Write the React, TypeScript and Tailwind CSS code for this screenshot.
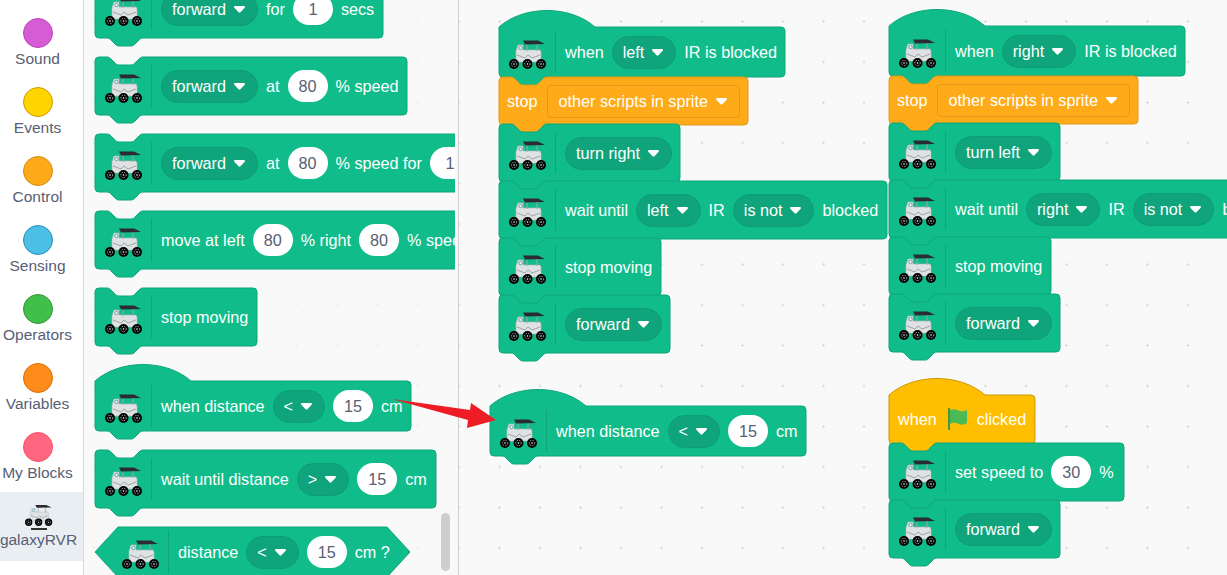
import React from 'react';

const GREEN = '#10bd8a';
const GREEN_EDGE = '#0da57a';

const tabBottom = (h: number) =>
  `V${h - 4} a4,4 0 0 1 -4,4 H48 c-2,0 -3,1 -4,2 l-4,4 c-1,1 -2,2 -4,2 h-12 c-2,0 -3,-1 -4,-2 l-4,-4 c-1,-1 -2,-2 -4,-2 H4 a4,4 0 0 1 -4,-4 z`;

const stackPath = (w: number, h: number) =>
  `M0,4 a4,4 0 0 1 4,-4 H12 c2,0 3,1 4,2 l4,4 c1,1 2,2 4,2 h12 c2,0 3,-1 4,-2 l4,-4 c1,-1 2,-2 4,-2 H${w - 4} a4,4 0 0 1 4,4 ${tabBottom(h)}`;

const hatPath = (w: number, h: number) =>
  `M0,0 c25,-22 71,-22 96,0 H${w - 4} a4,4 0 0 1 4,4 ${tabBottom(h)}`;

const hexPath = (w: number, h: number) =>
  `M0,${h / 2} L23,0 H${w - 23} L${w},${h / 2} L${w - 23},${h} H23 z`;

type BlockProps = {
  w: number;
  h?: number;
  shape?: 'stack' | 'hat' | 'hex';
  fill?: string;
  edge?: string;
  className?: string;
  children: React.ReactNode;
};

function Block({ w, h = 58, shape = 'stack', fill = GREEN, edge = GREEN_EDGE, className = '', children }: BlockProps) {
  const d = shape === 'hat' ? hatPath(w, h) : shape === 'hex' ? hexPath(w, h) : stackPath(w, h);
  return (
    <div className={`relative flex shrink-0 items-center ${className}`} style={{ width: w, height: h }}>
      <svg className="absolute left-0 top-0 overflow-visible" width={w} height={h}>
        <path d={d} fill={fill} stroke={edge} strokeWidth="1" />
      </svg>
      <div className="relative flex items-center whitespace-nowrap text-[16.2px] text-white">{children}</div>
    </div>
  );
}

function Rover({ small }: { small?: boolean }) {
  return (
    <svg
      viewBox="0 0 38 31"
      className={small ? 'h-[23px] w-[28px] shrink-0' : 'mt-[3px] h-[31px] w-[38px] shrink-0'}
    >
      <path d="M9 7h5v5h17l1 2v7l-3 3H9l-2-3v-8z" fill="#dfe2e2" stroke="#b4b8b8" strokeWidth="0.6" />
      <path d="M8 17l8 3 3-3 4 3 8-3M18 6v7M28 6v7" fill="none" stroke="#a0a5a5" strokeWidth="1" />
      <path d="M14 2.5h15l7 3.5-20 .4z" fill="#2a2c2f" />
      <circle cx="11.5" cy="10" r="1.7" fill="#eef6f8" stroke="#4a8fa8" strokeWidth="0.8" />
      {[5, 18.5, 32].map((x) => (
        <g key={x}>
          <circle cx={x} cy="26" r="5" fill="#000" />
          <circle cx={x} cy="26" r="2.7" fill="none" stroke="#d6d6d6" strokeWidth="0.8" strokeDasharray="1.4 1.2" />
          <circle cx={x} cy="26" r="0.8" fill="#fff" />
        </g>
      ))}
    </svg>
  );
}

function Head() {
  return (
    <>
      <Rover />
      <span className="ml-2 mr-[9px] h-[42px] w-px bg-[#0da57a]" />
    </>
  );
}

function Caret() {
  return (
    <svg viewBox="0 0 11 7" className="h-[7px] w-[11px] shrink-0">
      <path d="M1.2 0h8.6c1 0 1.5 1 .9 1.8L6.4 6.2c-.5.6-1.3.6-1.8 0L.3 1.8C-.3 1 .2 0 1.2 0z" fill="#fff" />
    </svg>
  );
}

function Drop({ label }: { label: string }) {
  return (
    <span className="flex h-[33px] items-center gap-2 rounded-full border border-[#0d9c74] bg-[#0fa47b] pl-[10px] pr-3 text-white">
      {label}
      <Caret />
    </span>
  );
}

function Val({ v }: { v: string }) {
  return (
    <span className="flex h-[32px] w-[40px] shrink-0 items-center justify-center rounded-full bg-white text-[#575e75]">
      {v}
    </span>
  );
}

function Row({ children }: { children: React.ReactNode }) {
  return <div className="flex items-center gap-2">{children}</div>;
}

function StopBlock({ w }: { w: number }) {
  return (
    <Block w={w} h={48} fill="#ffab19" edge="#e09a18">
      <div className="flex items-center gap-[9px] pl-2">
        <span>stop</span>
        <span className="flex h-[33px] items-center gap-2 rounded-[4px] border border-[#e39818] bg-[#ffab19] pl-[11px] pr-[12px]">
          other scripts in sprite
          <Caret />
        </span>
      </div>
    </Block>
  );
}

function Code({ w, hat, joined, children }: { w: number; hat?: boolean; joined?: boolean; children: React.ReactNode }) {
  return (
    <Block w={w} h={hat ? 50 : 58} shape={hat ? 'hat' : 'stack'} className={joined ? '-mt-px' : ''}>
      <div className="flex items-center pl-[10px]">
        <Head />
        <Row>{children}</Row>
      </div>
    </Block>
  );
}

function IRStack({ side, turn, w }: { side: string; turn: string; w: number[] }) {
  return (
    <>
      <Code w={w[0]} hat>
        when <Drop label={side} /> IR is blocked
      </Code>
      <StopBlock w={w[1]} />
      <Code w={w[2]} joined>
        <Drop label={turn} />
      </Code>
      <Code w={w[3]} joined>
        wait until <Drop label={side} /> IR <Drop label="is not" /> blocked
      </Code>
      <Code w={w[4]} joined>
        stop moving
      </Code>
      <Code w={w[5]} joined>
        <Drop label="forward" />
      </Code>
    </>
  );
}

const categories = [
  { name: 'Sound', fill: 'bg-[#d65cd6]', edge: 'border-[#bd42bd]' },
  { name: 'Events', fill: 'bg-[#ffd500]', edge: 'border-[#cc9900]' },
  { name: 'Control', fill: 'bg-[#ffab19]', edge: 'border-[#cf8b17]' },
  { name: 'Sensing', fill: 'bg-[#4cbfe6]', edge: 'border-[#2e8eb8]' },
  { name: 'Operators', fill: 'bg-[#40bf4a]', edge: 'border-[#389438]' },
  { name: 'Variables', fill: 'bg-[#ff8c1a]', edge: 'border-[#db6e00]' },
  { name: 'My Blocks', fill: 'bg-[#ff6680]', edge: 'border-[#ff4d6a]' },
];

export default function App() {
  return (
    <div className="relative flex h-[575px] w-[1227px] overflow-hidden bg-white font-['Liberation_Sans',Arial,sans-serif]">
      {/* category column */}
      <aside className="flex w-[84px] shrink-0 flex-col items-stretch border-r border-[#d9d9d9] bg-white pt-[9px] text-[15.5px] leading-4 text-[#575e75]">
        {categories.map((c) => (
          <div key={c.name} className="flex h-[69px] flex-col items-center whitespace-nowrap pr-2 pt-[9px]">
            <span className={`h-[30px] w-[30px] rounded-full border ${c.fill} ${c.edge}`} />
            <span className="mt-[3px]">{c.name}</span>
          </div>
        ))}
        <div className="flex h-[69px] flex-col items-center overflow-hidden whitespace-nowrap bg-[#e9eef2] pr-[6px] pt-[11px]">
          <Rover small />
          <span className="mt-[2px] h-[2px] w-[16px] bg-[#333]" />
          <span className="mt-[2px]">galaxyRVR</span>
        </div>
      </aside>

      {/* palette */}
      <section className="relative w-[375px] shrink-0 border-r border-[#d0d0d0] bg-[#f9f9f9] bg-[radial-gradient(circle,#f0f0f0_1px,transparent_1.2px)] bg-[size:40.5px_40.5px] bg-[position:30.25px_0.75px]">
        <div className="h-full w-[371px] overflow-hidden">
          <div className="-mt-[20px] flex flex-col gap-[19px] pl-[11px]">
            <Code w={288}>
              <Drop label="forward" /> for <Val v="1" /> secs
            </Code>
            <Code w={312}>
              <Drop label="forward" /> at <Val v="80" /> % speed
            </Code>
            <Code w={460}>
              <Drop label="forward" /> at <Val v="80" /> % speed for <Val v="1" />
            </Code>
            <Code w={460}>
              move at left <Val v="80" /> % right <Val v="80" /> % speed
            </Code>
            <Code w={162}>stop moving</Code>
            <div className="mt-[16px]">
              <Code w={316} hat>
                when distance <Drop label="<" /> <Val v="15" /> cm
              </Code>
            </div>
            <Code w={341}>
              wait until distance <Drop label=">" /> <Val v="15" /> cm
            </Code>
            <Block w={315} h={50} shape="hex">
              <div className="flex items-center pl-[27px]">
                <Head />
                <Row>
                  distance <Drop label="<" /> <Val v="15" /> cm ?
                </Row>
              </div>
            </Block>
          </div>
        </div>
        <span className="absolute left-[357px] top-[513px] h-[58px] w-[9px] rounded-full bg-[#cecece]" />
      </section>

      {/* workspace */}
      <main className="relative flex-1 bg-[#f9f9f9] bg-[radial-gradient(circle,#dcdcdc_1px,transparent_1.2px)] bg-[size:40.5px_40.5px] bg-[position:20.25px_1.25px]">
        <div className="absolute left-[40px] top-[27px] flex flex-col items-start">
          <IRStack side="left" turn="turn right" w={[286, 249, 181, 388, 162, 171]} />
        </div>
        <div className="absolute left-[430px] top-[26px] flex flex-col items-start">
          <IRStack side="right" turn="turn left" w={[296, 249, 171, 420, 162, 171]} />
        </div>
        <div className="absolute left-[31px] top-[406px]">
          <Code w={316} hat>
            when distance <Drop label="<" /> <Val v="15" /> cm
          </Code>
        </div>
        <div className="absolute left-[430px] top-[395px] flex flex-col items-start">
          <Block w={146} h={49} shape="hat" fill="#ffbf00" edge="#cc9900">
            <div className="flex items-center pl-[9px]">
              when
              <svg viewBox="0 0 21 22" className="ml-[10px] mr-[9px] h-[22px] w-[21px]">
                <path d="M1 0h2v22H1z" fill="#45993d" />
                <path d="M3 2c5-2 7 0 10 1 3 .8 5 0 7-1v13c-3 2-5 2-8 1-3-1-5-2-9 0z" fill="#4cb856" />
              </svg>
              clicked
            </div>
          </Block>
          <Code w={235} joined>
            set speed to <Val v="30" /> %
          </Code>
          <Code w={171} joined>
            <Drop label="forward" />
          </Code>
        </div>
      </main>

      {/* annotation arrow */}
      <svg className="absolute left-0 top-0" width="1227" height="575">
        <path d="M392 399 L470 410 L471 403 L496 420 L467 428 L468 420 Z" fill="#ee1c25" />
      </svg>
    </div>
  );
}
